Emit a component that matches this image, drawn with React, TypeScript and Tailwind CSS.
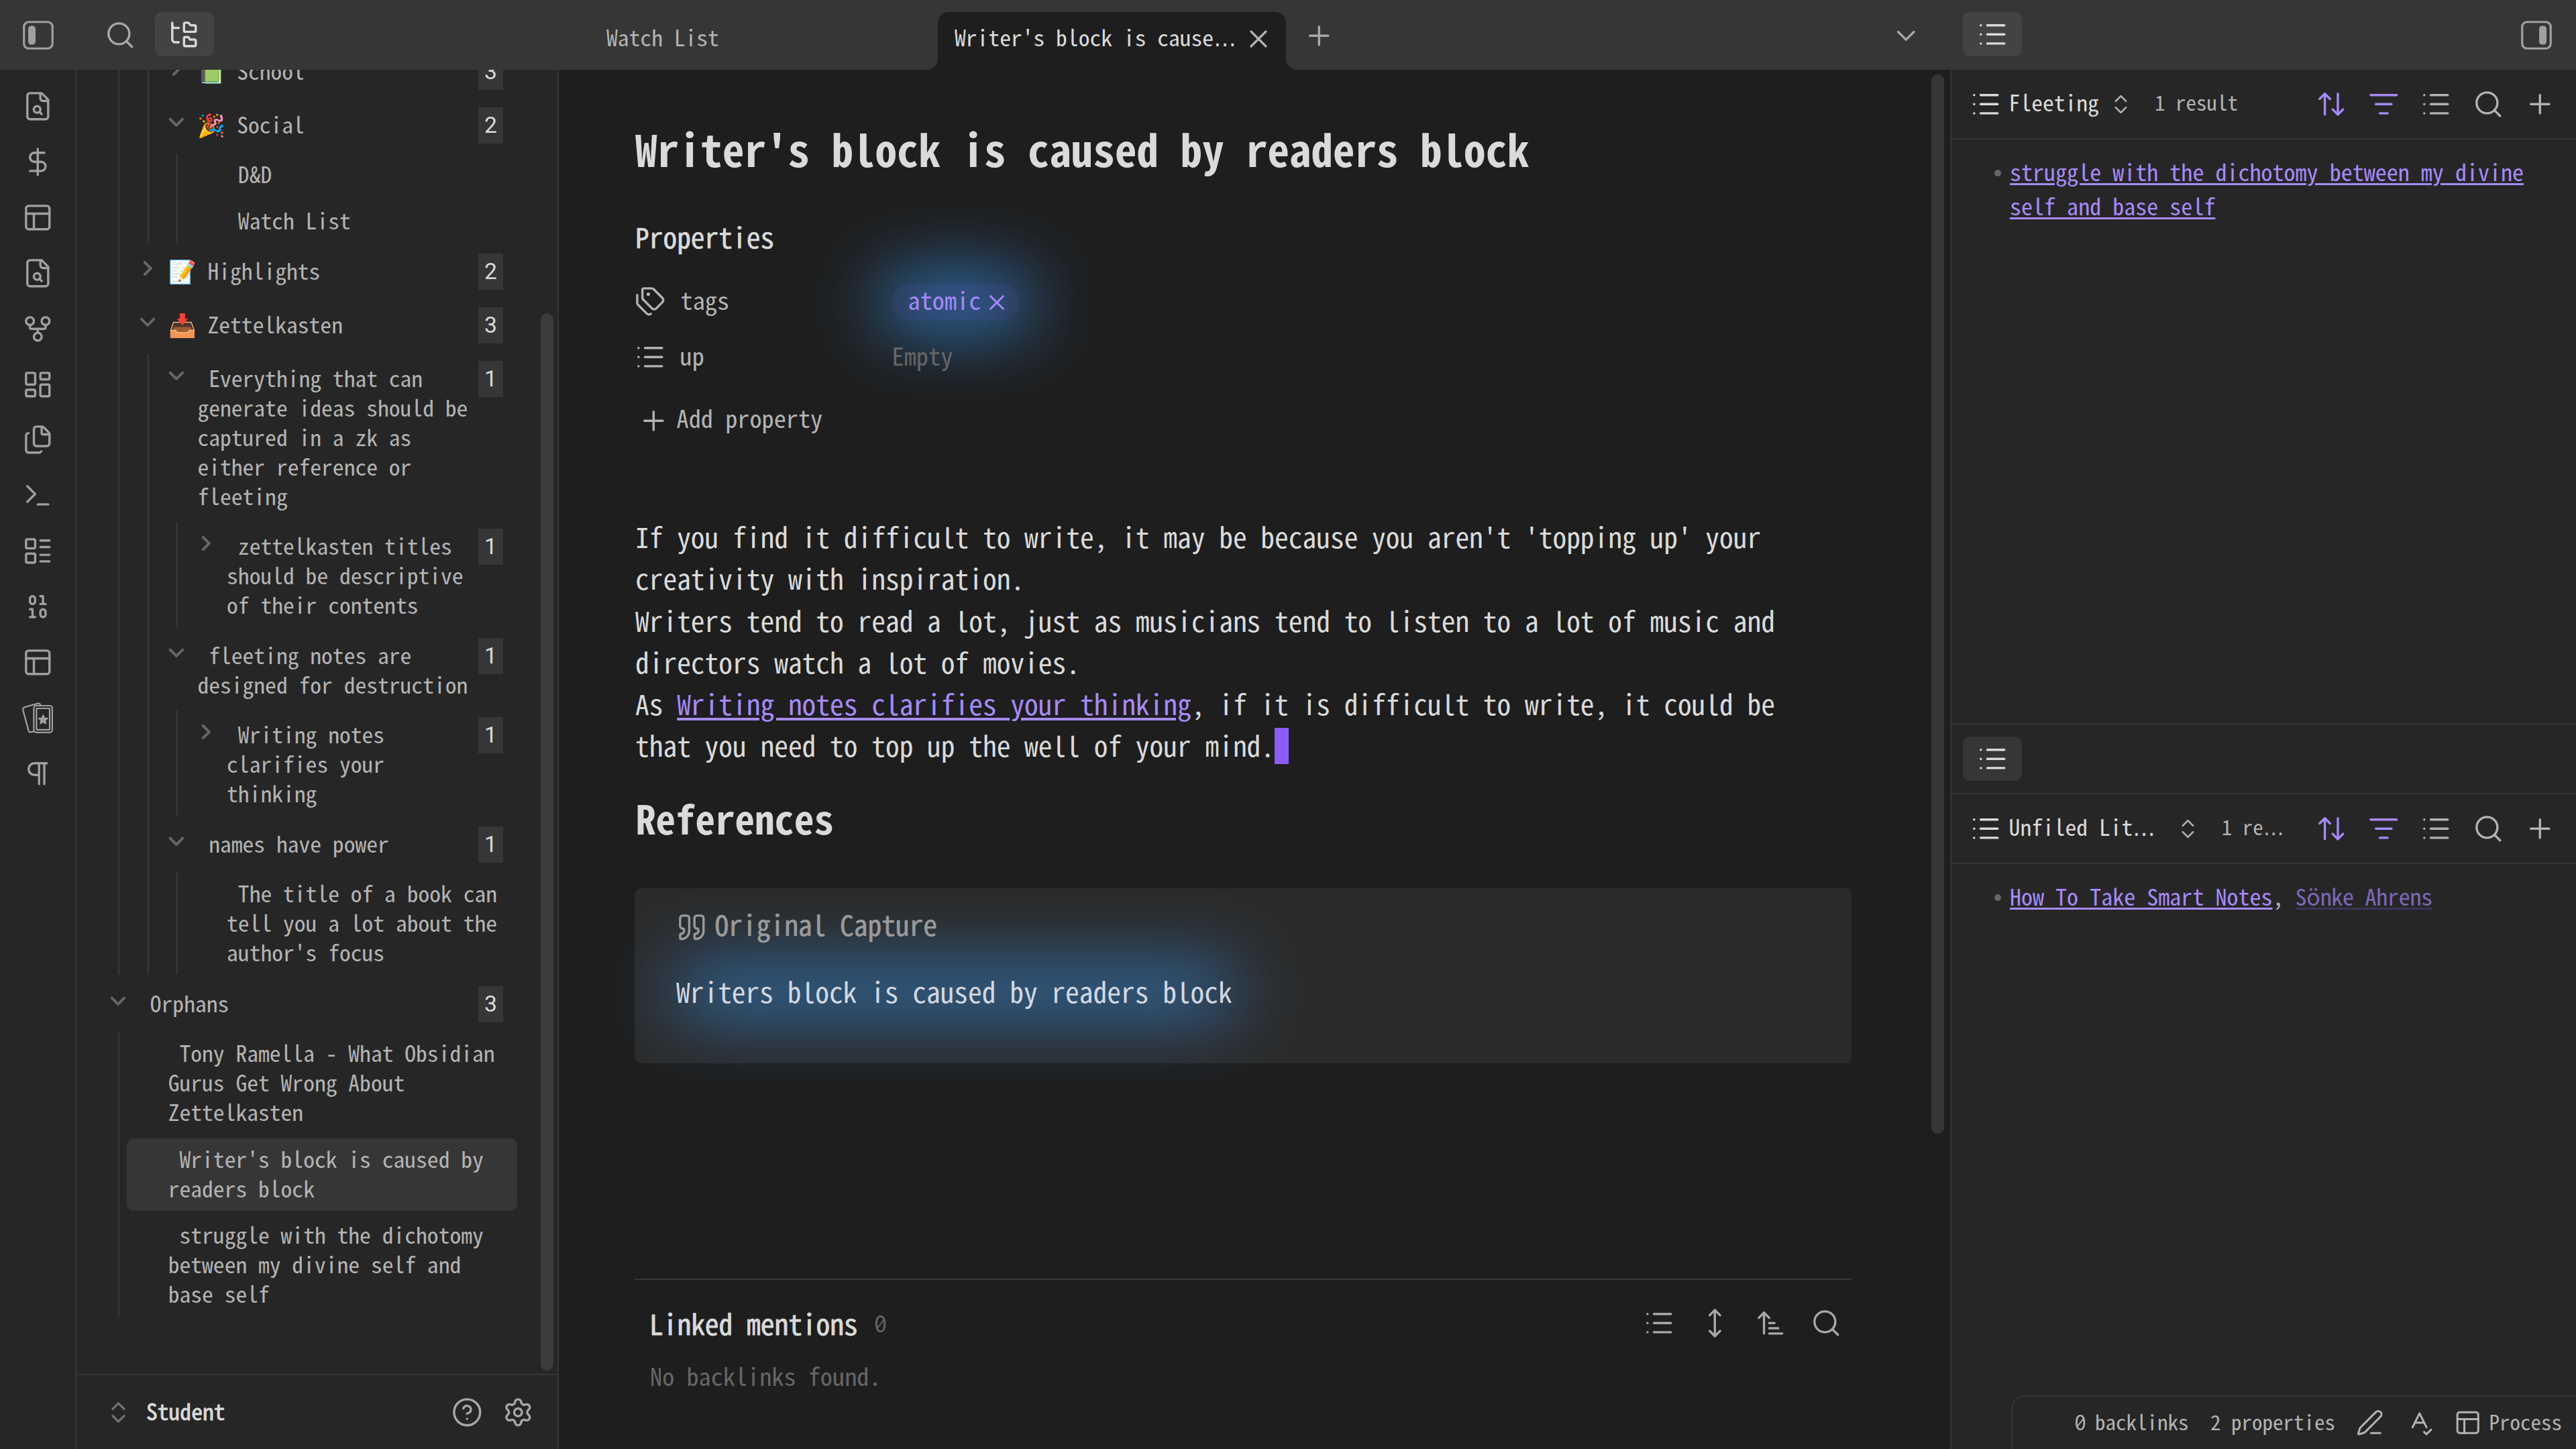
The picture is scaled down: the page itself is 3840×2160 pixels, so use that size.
import type { ReactNode } from 'react';
import { clsx } from 'clsx';
import {
    ArrowUpDown,
    ArrowUpNarrowWide,
    Binary,
    ChevronDown,
    ChevronsUpDown,
    CircleHelp,
    DollarSign,
    Files,
    FolderTree,
    GitFork,
    LayoutDashboard,
    LayoutList,
    List,
    ListFilter,
    MoveVertical,
    PanelsTopLeft,
    PenLine,
    Pilcrow,
    Plus,
    Quote,
    Search,
    Settings,
    SpellCheck,
    Tags,
    Terminal,
    X,
} from 'lucide-react';

interface TreeNode {
    label: string;
    count?: number;
    open?: boolean;
    active?: boolean;
    gap?: string;
    children?: TreeNode[];
}

const zettelkasten: TreeNode[] = [
    {
        label: ' Everything that can\ngenerate ideas should be\ncaptured in a zk as\neither reference or\nfleeting',
        count: 1,
        open: true,
        children: [{ label: ' zettelkasten titles\nshould be descriptive\nof their contents', count: 1 }],
    },
    {
        label: ' fleeting notes are\ndesigned for destruction',
        count: 1,
        open: true,
        gap: 'mt-[21px]',
        children: [{ label: ' Writing notes\nclarifies your\nthinking', count: 1 }],
    },
    {
        label: ' names have power',
        count: 1,
        open: true,
        gap: 'mt-[21px]',
        children: [{ label: " The title of a book can\ntell you a lot about the\nauthor's focus" }],
    },
];

const folders: TreeNode[] = [
    { label: '📗 School', count: 3 },
    {
        label: '🎉 Social',
        count: 2,
        open: true,
        gap: 'mt-[36px]',
        children: [{ label: ' D&D' }, { label: ' Watch List', gap: 'mt-[25px]' }],
    },
];

const orphans: TreeNode[] = [
    { label: ' Tony Ramella - What Obsidian\nGurus Get Wrong About\nZettelkasten' },
    { label: " Writer's block is caused by\nreaders block", gap: 'mt-[26px]', active: true },
    { label: ' struggle with the dichotomy\nbetween my divine self and\nbase self', gap: 'mt-[25px]' },
];

const ICON = 'w-[46.6px] h-[46.6px] shrink-0';
const SMALL_ICON = 'w-[41.5px] h-[41.5px] shrink-0';

function FileSearchIcon() {
    return (
        <svg viewBox="0 0 24 24" className={ICON} fill="none" stroke="currentColor" strokeWidth={1.75} strokeLinecap="round" strokeLinejoin="round">
            <path d="M15 2H6a2 2 0 0 0-2 2v16a2 2 0 0 0 2 2h12a2 2 0 0 0 2-2V7Z" />
            <path d="M14 2v4a2 2 0 0 0 2 2h4" />
            <circle cx="11.5" cy="14.5" r="2.5" />
            <path d="M13.3 16.3 15 18" />
        </svg>
    );
}

function CardsIcon() {
    return (
        <svg viewBox="0 0 46 46" className="w-[46px] h-[46px]" fill="none" stroke="currentColor" strokeWidth="2.2" strokeLinejoin="round">
            <path d="M17 43.6 L12 44.4 Q10.2 44.4 9.6 42.4 L1.3 11.6 Q0.8 8.4 3.4 7.2 L23.5 1.6 Q26.4 1 27.4 4" />
            <rect x="17.4" y="5" width="27.5" height="39.8" rx="3.5" />
            <rect x="21.4" y="9" width="19.6" height="31.8" rx="0.5" />
            <path
                d="M31.3 18.6 l2.1 4.5 4.9.6 -3.6 3.4 1 4.9 -4.4-2.4 -4.4 2.4 1-4.9 -3.6-3.4 4.9-.6z"
                fill="currentColor"
                strokeWidth="1.2"
            />
        </svg>
    );
}

const ribbon: ReactNode[] = [
    <FileSearchIcon />,
    <DollarSign className={ICON} strokeWidth={1.75} />,
    <PanelsTopLeft className={ICON} strokeWidth={1.75} />,
    <FileSearchIcon />,
    <GitFork className={ICON} strokeWidth={1.75} />,
    <LayoutDashboard className={ICON} strokeWidth={1.75} />,
    <Files className={ICON} strokeWidth={1.75} />,
    <Terminal className={ICON} strokeWidth={1.75} />,
    <LayoutList className={ICON} strokeWidth={1.75} />,
    <Binary className={ICON} strokeWidth={1.75} />,
    <PanelsTopLeft className={ICON} strokeWidth={1.75} />,
    <CardsIcon />,
    <Pilcrow className={ICON} strokeWidth={1.75} />,
];

function SidebarIcon({ right }: { right?: boolean }) {
    return (
        <svg viewBox="0 0 46 43" className={clsx('w-[46px] h-[43px] shrink-0 text-[#a0a0a0]', right && '-scale-x-100')}>
            <rect x="1.75" y="1.75" width="42.5" height="39.5" rx="7" fill="none" stroke="currentColor" strokeWidth="3.2" />
            <rect x="8" y="7.5" width="11" height="28" rx="4.5" fill="currentColor" />
        </svg>
    );
}

function Ellipsis() {
    return <span className="font-['DejaVu_Sans',sans-serif] leading-[0]">…</span>;
}

function Zero() {
    return <span className="font-['Inconsolata','Noto_Sans_Mono_CJK_JP',monospace] text-[1.17em] leading-[0] tracking-[-0.075em]">0</span>;
}

function Row({ node }: { node: TreeNode }) {
    const first = node.children?.[0];
    return (
        <div
            className={clsx(
                'flex items-start',
                node.active && '-ml-[18px] -mr-[21px] -my-[10px] py-[10px] pl-[18px] pr-[21px] rounded-[10px] bg-[#363636]',
                first && (first.count ? 'mb-[15px]' : 'mb-5'),
            )}
        >
            <div className="w-[26px] h-[44px] mr-[18px] shrink-0 pt-[4px]">
                {node.count && (
                    <svg
                        viewBox="0 0 24 24"
                        className={clsx('w-[26px] h-[26px] text-[#666]', !node.open && '-rotate-90')}
                        fill="none"
                        stroke="currentColor"
                        strokeWidth="3.6"
                        strokeLinecap="round"
                        strokeLinejoin="round"
                    >
                        <path d="M3.5 8L12 16.5L20.5 8" />
                    </svg>
                )}
            </div>
            <div className="flex-1 min-w-0 whitespace-pre leading-[44px] -mt-[2px] mb-[2px] text-[#b3b3b3]">{node.label}</div>
            {node.count && (
                <div className="w-[37px] h-[54px] -my-[5px] shrink-0 bg-[#363636] text-[#dadada] text-center leading-[54px] font-['Roboto',sans-serif]">
                    {node.count}
                </div>
            )}
        </div>
    );
}

function Branch({ nodes, className }: { nodes: TreeNode[]; className?: string }) {
    return (
        <div
            className={clsx(
                'ml-[13px] pl-[28.7px] pb-[10px] border-l-2 border-[#3a3a3a]',
                nodes[0].count ? 'pt-[15px]' : 'pt-[10px]',
                className,
            )}
        >
            <Nodes nodes={nodes} />
        </div>
    );
}

function Nodes({ nodes }: { nodes: TreeNode[] }) {
    return (
        <>
            {nodes.map((node, i) => (
                <div key={node.label} className={node.gap}>
                    <Row node={node} />
                    {node.children && <Branch nodes={node.children} className={i === nodes.length - 1 ? '-mb-[10px]' : ''} />}
                </div>
            ))}
        </>
    );
}

function LeftSidebar() {
    return (
        <div className="w-[719px] flex flex-col border-r-2 border-[#363636] bg-[#262626]">
            <div className="h-[1944px] flex justify-between overflow-hidden">
                <div className="w-[636px] pl-[49px] -mt-[19px] text-[33.6px]">
                    <div className="ml-[13px] pl-[28.7px] pb-[10px] border-l-2 border-[#3a3a3a]">
                        <div className="ml-[13px] pl-[28.7px] pb-[10px] border-l-2 border-[#3a3a3a]">
                            <Nodes nodes={folders} />
                        </div>
                        <div className="mt-[21px]">
                            <Row node={{ label: '📝 Highlights', count: 2 }} />
                        </div>
                        <div className="mt-[36px]">
                            <Row node={{ label: '📥 Zettelkasten', count: 3, open: true }} />
                        </div>
                        <Branch nodes={zettelkasten} className="mt-[21px] -mb-[10px]" />
                    </div>
                    <div className="mt-[22px]">
                        <Row node={{ label: ' Orphans', count: 3, open: true, children: orphans }} />
                    </div>
                    <Branch nodes={orphans} />
                </div>
                <div className="w-[19px] h-[1576px] mt-[363px] mr-[6px] rounded-full bg-[#3c3c3c]" />
            </div>
            <div className="flex-1 flex items-center pl-[42px] pr-[35px] border-t-2 border-[#363636]">
                <ChevronsUpDown className="w-[41px] h-[41px] text-[#707070]" strokeWidth={2} />
                <span className="ml-[21px] pb-1 flex-1 text-[33.6px] text-[#dadada] [-webkit-text-stroke:0.8px]">Student</span>
                <CircleHelp className="w-[46.6px] h-[46.6px] mr-[30px] text-[#a8a8a8]" strokeWidth={1.75} />
                <Settings className="w-[46.6px] h-[46.6px] text-[#a8a8a8]" strokeWidth={1.75} />
            </div>
        </div>
    );
}

function TopBar() {
    return (
        <div className="h-[104px] flex bg-[#363636] text-[33.6px] text-[#a8a8a8]">
            <div className="w-[833px] flex items-center pl-[34px]">
                <SidebarIcon />
                <Search className="w-[46.6px] h-[46.6px] ml-[76px]" strokeWidth={1.75} />
                <div className="w-[88px] h-[66px] ml-[28px] -mt-[2px] flex items-center justify-center rounded-[10px] bg-[#434343] text-[#dadada]">
                    <FolderTree className={ICON} strokeWidth={1.75} />
                </div>
            </div>
            <div className="w-[2074px] flex pl-[46px]">
                <div className="w-[519px] mt-[18px] pt-[15px] pl-[25px] leading-[44px] text-[#b3b3b3]">Watch List</div>
                <div className="relative w-[519px] mt-[18px] pl-[25px] pr-[19px] flex justify-between rounded-t-[16px] bg-[#1e1e1e]">
                    <div className="absolute w-4 h-4 bottom-0 -left-4 bg-[radial-gradient(circle_at_0_0,transparent_15.5px,#1e1e1e_16px)]" />
                    <div className="absolute w-4 h-4 bottom-0 -right-4 bg-[radial-gradient(circle_at_100%_0,transparent_15.5px,#1e1e1e_16px)]" />
                    <span className="pt-[15px] leading-[44px] text-[#dadada]">
                        Writer's block is cause
                        <Ellipsis />
                    </span>
                    <X className="w-[44px] h-[44px] mt-[18px] text-[#b3b3b3]" strokeWidth={1.75} />
                </div>
                <Plus className="w-[46.6px] h-[46.6px] ml-[26px] mt-[30px]" strokeWidth={1.75} />
                <ChevronDown className="w-[46.6px] h-[46.6px] ml-auto mr-[42px] mt-[30px]" strokeWidth={1.75} />
            </div>
            <div className="flex-1 flex items-center justify-between pl-[19px] pr-[36px]">
                <div className="w-[88px] h-[66px] -mt-[2px] flex items-center justify-center rounded-[10px] bg-[#434343] text-[#dadada]">
                    <List className={ICON} strokeWidth={1.75} />
                </div>
                <SidebarIcon right />
            </div>
        </div>
    );
}

function Glow({ className }: { className: string }) {
    return <div className={clsx('absolute -z-10 bg-[#3488d6] blur-[54px]', className)} />;
}

function Editor() {
    return (
        <div className="relative isolate w-[2074px] flex justify-between">
            <div className="w-[1814px] ml-[113px] flex flex-col text-[41.45px] leading-[62.2px] text-[#dadada]">
                <h1 className="mt-[77px] pl-[1px] text-[65px] leading-[80px] font-bold">Writer's block is caused by readers block</h1>
                <div className="mt-[60px] pl-[1px] [-webkit-text-stroke:0.6px]">Properties</div>

                <div className="mt-[25px] text-[36.27px] text-[#b3b3b3]">
                    <div className="h-[83px] flex items-center">
                        <Tags className={ICON} strokeWidth={1.75} />
                        <span className="w-[314px] ml-[22px] pb-2">tags</span>
                        <div className="relative w-[191px] h-[55px] pl-[25px] pr-[15px] mt-[2px] flex items-center justify-between rounded-full bg-[#8a5cf514] text-[#a68af9]">
                            <Glow className="-inset-x-[14px] -inset-y-[8px]" />
                            <span className="pb-[9px]">atomic</span>
                            <X className="w-[38px] h-[38px]" strokeWidth={1.75} />
                        </div>
                    </div>
                    <div className="h-[83px] flex items-center">
                        <List className={ICON} strokeWidth={1.75} />
                        <span className="w-[316px] ml-[21px] pb-2">up</span>
                        <span className="pb-2 text-[#666]">Empty</span>
                    </div>
                    <div className="h-[60px] mt-[23px] flex items-center">
                        <Plus className="w-[46.6px] h-[46.6px] ml-[5px] mr-[11px]" strokeWidth={1.75} />
                        <span className="pb-[10px]">Add property</span>
                    </div>
                </div>

                <div className="mt-[111px] pl-[1px] whitespace-nowrap">
                    <p>If you find it difficult to write, it may be because you aren't 'topping up' your</p>
                    <p>creativity with inspiration.</p>
                    <p>Writers tend to read a lot, just as musicians tend to listen to a lot of music and</p>
                    <p>directors watch a lot of movies.</p>
                    <p>
                        As{' '}
                        <a className="text-[#a68af9] underline decoration-[4px] underline-offset-[4px]">Writing notes clarifies your thinking</a>
                        , if it is difficult to write, it could be
                    </p>
                    <p className="flex">
                        that you need to top up the well of your mind.
                        <span className="w-[21px] h-[54px] mt-[6px] bg-[#8a5cf5]" />
                    </p>
                </div>

                <h2 className="mt-[38px] pl-[2px] text-[59px] leading-[80px] font-bold">References</h2>
                <div className="relative isolate h-[261px] mt-[65px] pt-[22px] pl-[62px] rounded-[10px] bg-[#2b2b2b]">
                    <div className="flex items-center text-[#9a9a9a]">
                        <Quote className={ICON} strokeWidth={1.75} />
                        <span className="ml-[11px] pb-[10px] [-webkit-text-stroke:0.6px]">Original Capture</span>
                    </div>
                    <div className="mt-[27px] flex">
                        <div className="relative text-[#d2d8e2]">
                            <Glow className="inset-x-0 inset-y-[3px]" />
                            Writers block is caused by readers block
                        </div>
                    </div>
                </div>

                <div className="mt-[321px] pt-[33px] border-t-2 border-[#363636]">
                    <div className="flex items-center pl-[22px] pr-[14px] text-[#a8a8a8]">
                        <span className="text-[#dadada] [-webkit-text-stroke:0.8px]">Linked mentions</span>
                        <span className="flex-1 ml-[24px] text-[33.6px] text-[#666]">
                            <Zero />
                        </span>
                        <div className="flex gap-[36.5px]">
                            <List className={ICON} strokeWidth={1.75} />
                            <MoveVertical className={ICON} strokeWidth={1.75} />
                            <ArrowUpNarrowWide className={ICON} strokeWidth={1.75} />
                            <Search className={ICON} strokeWidth={1.75} />
                        </div>
                    </div>
                    <div className="mt-[16px] pl-[23px] text-[36.27px] leading-[60px] text-[#666]">No backlinks found.</div>
                </div>
            </div>
            <div className="w-[19px] h-[1579px] mt-[7px] mr-[9px] rounded-full bg-[#363636]" />
        </div>
    );
}

function ViewHeader({ name, count }: { name: ReactNode; count: ReactNode }) {
    return (
        <div className="h-[104px] flex items-center pl-[28px] pr-[30px] border-b-2 border-[#363636] text-[#b3b3b3]">
            <List className="w-[46.6px] h-[46.6px] text-[#dadada]" strokeWidth={1.75} />
            <span className="ml-[11px] pb-[6px] text-[33.6px] text-[#dadada]">{name}</span>
            {count}
            <div className="ml-auto flex gap-[31.2px]">
                <ArrowUpDown className="w-[46.6px] h-[46.6px] text-[#a68af9]" strokeWidth={1.75} />
                <ListFilter className="w-[46.6px] h-[46.6px] text-[#a68af9]" strokeWidth={1.75} />
                <List className={ICON} strokeWidth={1.75} />
                <Search className={ICON} strokeWidth={1.75} />
                <Plus className={ICON} strokeWidth={1.75} />
            </div>
        </div>
    );
}

function RightSidebar() {
    return (
        <div className="flex-1 relative border-l-2 border-[#363636] bg-[#262626]">
            <div className="h-[976px] border-b-2 border-[#363636]">
                <ViewHeader
                    name="Fleeting"
                    count={
                        <>
                            <ChevronsUpDown className="w-[37px] h-[37px] ml-[14px]" strokeWidth={1.75} />
                            <span className="ml-[32px] pb-[6px] text-[31px]">1 result</span>
                        </>
                    }
                />
                <div className="flex pl-[64px] pt-[22px] text-[34.06px] leading-[51px] text-[#a68af9]">
                    <div className="w-[10px] h-[10px] mt-[23px] mr-[13px] rounded-full bg-[#666]" />
                    <a className="whitespace-pre underline decoration-[3px] underline-offset-[3px]">
                        {'struggle with the dichotomy between my divine\nself and base self'}
                    </a>
                </div>
            </div>
            <div className="h-[104px] flex items-center pl-[17px] border-b-2 border-[#363636]">
                <div className="w-[88px] h-[66px] flex items-center justify-center rounded-[10px] bg-[#363636] text-[#dadada]">
                    <List className={ICON} strokeWidth={1.75} />
                </div>
            </div>
            <ViewHeader
                name={
                    <>
                        Unfiled Lit
                        <Ellipsis />
                    </>
                }
                count={
                    <>
                        <ChevronsUpDown className="w-[37px] h-[37px] ml-[30px]" strokeWidth={1.75} />
                        <span className="ml-[32px] pb-[6px] text-[31px]">
                            1 re
                            <Ellipsis />
                        </span>
                    </>
                }
            />
            <div className="flex pl-[64px] pt-[22px] text-[34.06px] leading-[51px] text-[#b3b3b3]">
                <div className="w-[10px] h-[10px] mt-[23px] mr-[13px] rounded-full bg-[#666]" />
                <div className="whitespace-pre">
                    <a className="text-[#a68af9] underline decoration-[3px] underline-offset-[3px]">How To Take Smart Notes</a>
                    {', '}
                    <a className="text-[#7d68b8] underline decoration-[#3d3358] decoration-[3px] underline-offset-[3px] tracking-[-0.3px]">
                        Sönke Ahrens
                    </a>
                </div>
            </div>

            {/* Status bar floats over the bottom right corner */}
            <div className="absolute right-0 bottom-0 w-[842px] h-[80px] flex items-center pl-[92px] rounded-tl-[20px] border-t-2 border-l-2 border-[#363636] bg-[#262626] text-[31px] text-[#b3b3b3]">
                <span className="w-[203px] pb-[3px]">
                    <Zero /> backlinks
                </span>
                <span className="w-[217px] pb-[3px]">2 properties</span>
                <PenLine className={SMALL_ICON} strokeWidth={1.75} />
                <SpellCheck className="w-[41.5px] h-[41.5px] ml-[32px]" strokeWidth={1.75} />
                <PanelsTopLeft className="w-[41.5px] h-[41.5px] ml-[31px]" strokeWidth={1.75} />
                <span className="ml-[11px] pb-[3px]">Process</span>
            </div>
        </div>
    );
}

export default function App() {
    return (
        <div className="w-[3840px] h-[2160px] flex flex-col overflow-hidden bg-[#1e1e1e] font-['Noto_Sans_Mono_CJK_JP','Noto_Sans_Mono_CJK_SC','Liberation_Mono',monospace]">
            <TopBar />
            <div className="flex-1 flex min-h-0">
                <div className="w-[114px] flex flex-col items-center pt-[13px] border-r-2 border-[#363636] bg-[#262626] text-[#a0a0a0]">
                    {ribbon.map((icon, i) => (
                        <div key={i} className="h-[82.9px] flex items-center">
                            {icon}
                        </div>
                    ))}
                </div>
                <LeftSidebar />
                <Editor />
                <RightSidebar />
            </div>
        </div>
    );
}
